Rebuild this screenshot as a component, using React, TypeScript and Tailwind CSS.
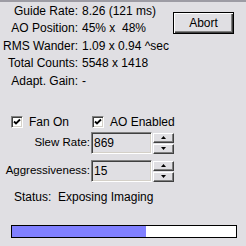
import React from "react";

const stats: [string, string][] = [
  ["Guide Rate:", "8.26 (121 ms)"],
  ["AO Position:", "45% x  48%"],
  ["RMS Wander:", "1.09 x 0.94 ^sec"],
  ["Total Counts:", "5548 x 1418"],
  ["Adapt. Gain:", "-"],
];

function Check({ label }: { label: string }) {
  return (
    <div className="flex items-center gap-[6px]">
      <div className="w-[12px] h-[12px] bg-white border border-t-[#808080] border-l-[#808080] border-b-white border-r-white shadow-[inset_1px_1px_0_#404040,inset_-1px_-1px_0_#d4d0c8] flex items-center justify-center">
        <svg width="8" height="8" viewBox="0 0 8 8">
          <path d="M1 3.5 L3 5.5 L7 1.5" stroke="#000" strokeWidth="1.8" fill="none" />
        </svg>
      </div>
      <span>{label}</span>
    </div>
  );
}

function Arrow({ down }: { down?: boolean }) {
  return (
    <svg width="5" height="3" viewBox="0 0 5 3">
      <path d={down ? "M0 0 H5 L2.5 3 Z" : "M0 3 H5 L2.5 0 Z"} fill="#000" />
    </svg>
  );
}

function SpinField({ label, value }: { label: string; value: string }) {
  const btn =
    "w-[21px] h-[10px] bg-[#e0dfe3] border border-t-white border-l-white border-b-[#404040] border-r-[#404040] shadow-[inset_-1px_-1px_0_#808080] flex items-center justify-center";
  return (
    <div className="flex items-center h-[22px]">
      <div className="w-[90px] text-right text-[11.5px]">{label}</div>
      <div className="ml-[1px] w-[61px] h-[22px] bg-[#e0dfe3] border border-t-[#808080] border-l-[#808080] border-b-white border-r-white shadow-[inset_1px_1px_0_#404040,inset_-1px_-1px_0_#d4d0c8] pl-[2px] flex items-center">
        {value}
      </div>
      <div className="ml-[1px] flex flex-col gap-[1px] pt-[1px] h-[22px]">
        <div className={btn}>
          <Arrow />
        </div>
        <div className={btn}>
          <Arrow down />
        </div>
      </div>
    </div>
  );
}

export default function App() {
  return (
    <div className="w-[246px] h-[246px] bg-[#e0dfe3] border-t-2 border-[#9d9ca4] font-['Liberation_Sans',Arial,sans-serif] text-[12px] text-black flex flex-col overflow-hidden">
      <div className="flex items-start">
        <div className="grid grid-cols-[78px_auto] auto-rows-[17.5px] gap-x-[4px] whitespace-pre">
          {stats.map(([k, v]) => (
            <React.Fragment key={k}>
              <div className="text-right self-center">{k}</div>
              <div className="self-center">{v}</div>
            </React.Fragment>
          ))}
        </div>
        <button className="ml-auto mt-[10px] mr-[12px] w-[61px] h-[22px] shrink-0 bg-[#e0dfe3] border border-black shadow-[inset_1px_1px_0_#fff,inset_-1px_-1px_0_#404040,inset_-2px_-2px_0_#808080] text-[12px]">
          Abort
        </button>
      </div>

      <div className="mt-[25px] h-[14px] pl-[11px] flex items-center">
        <div className="w-[81px]">
          <Check label="Fan On" />
        </div>
        <Check label="AO Enabled" />
      </div>

      <div className="mt-[3px]">
        <SpinField label="Slew Rate:" value="869" />
      </div>
      <div className="mt-[6px]">
        <SpinField label="Aggressiveness:" value="15" />
      </div>

      <div className="mt-[8px] pl-[14px] h-[14px] flex items-center whitespace-pre">
        Status:  Exposing Imaging
      </div>

      <div className="mt-[21px] ml-[11px] w-[226px] h-[13px] border border-black bg-white flex">
        <div className="w-[60%] h-full bg-[#8080ff]" />
      </div>
    </div>
  );
}
